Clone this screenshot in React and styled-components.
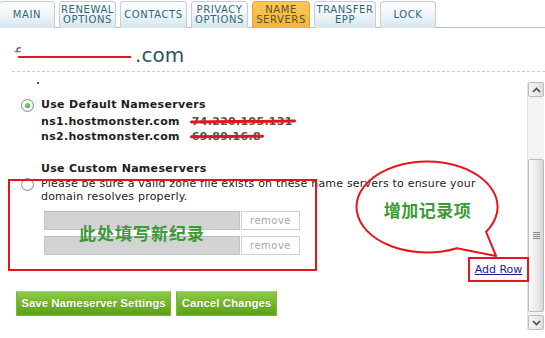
import styled, { createGlobalStyle } from "styled-components";

const Global = createGlobalStyle`
  html, body { margin: 0; padding: 0; background: #fff; }
  body { font-family: "DejaVu Sans", Verdana, sans-serif; }
`;

const Page = styled.div`
  position: relative;
  width: 545px;
  height: 338px;
  overflow: hidden;
  background: #fff;
  color: #222;
`;

const TabBar = styled.div`
  display: flex;
  gap: 4px;
  height: 28px;
  padding-top: 1px;
  box-sizing: border-box;
  border-bottom: 1px solid #b9c3c7;
  margin-left: -1px;
`;

const Tab = styled.div`
  width: ${(p) => p.w}px;
  height: 27px;
  box-sizing: border-box;
  border: 1px solid ${(p) => (p.active ? "#e7a63a" : "#c5cfd3")};
  border-bottom: none;
  border-radius: 4px 4px 0 0;
  background: ${(p) =>
    p.active
      ? "linear-gradient(#f9c75a, #f4b33b)"
      : "linear-gradient(#ffffff 0%, #f3f8fa 40%, #d5e6ef 100%)"};
  display: flex;
  align-items: center;
  justify-content: center;
  text-align: center;
  font-size: 10px;
  line-height: 10px;
  letter-spacing: 0.6px;
  color: ${(p) => (p.active ? "#5c5222" : "#2f6878")};
`;

const Header = styled.div`
  height: 44px;
  box-sizing: border-box;
  margin-left: 12px;
  padding: 14px 0 0 2px;
  border-bottom: 1px dashed #cccccc;
`;

const Title = styled.h1`
  margin: 0;
  font-size: 20px;
  font-weight: normal;
  line-height: 26px;
  color: #2c5364;
`;

const Ghost = styled.span`
  display: inline-block;
  color: #777;
  clip-path: inset(0 0 60% 0);
`;

const Redact = styled.span`
  display: inline-block;
  width: 113px;
  height: 2px;
  margin: 0 4px 0 -3px;
  background: #e3161d;
  vertical-align: 4px;
`;

const Body = styled.div`
  display: flex;
  height: 266px;
`;

const Content = styled.div`
  position: relative;
  flex: 1;
  min-width: 0;
`;

const Dot = styled.div`
  width: 2px;
  height: 2px;
  margin: 10px 0 0 37px;
  background: #555;
`;

const OptionRow = styled.div`
  display: flex;
  align-items: flex-start;
  gap: 7px;
  padding-left: 21px;
  margin-top: ${(p) => p.mt || 0}px;
`;

const Radio = styled.span`
  position: relative;
  flex: none;
  width: 13px;
  height: 13px;
  margin-top: ${(p) => p.mt || 0}px;
  box-sizing: border-box;
  border-radius: 50%;
  border: 1px solid #7f8e9c;
  background: radial-gradient(circle at 40% 35%, #ffffff 30%, #dde3e8 100%);

  &::after {
    content: "";
    display: ${(p) => (p.checked ? "block" : "none")};
    position: absolute;
    left: 3px;
    top: 3px;
    width: 5px;
    height: 5px;
    border-radius: 50%;
    background: radial-gradient(circle at 40% 35%, #7fe07a, #1f9a2a);
  }
`;

const Label = styled.div`
  font-size: 11px;
  font-weight: bold;
  line-height: 15px;
  letter-spacing: 0.3px;
  color: #1e1e1e;
`;

const NsList = styled.div`
  margin-top: 2px;
  padding-left: 41px;
`;

const NsLine = styled.div`
  display: flex;
  gap: 12px;
  font-size: 11px;
  font-weight: bold;
  line-height: 15px;
  letter-spacing: 0.3px;
  color: #1e1e1e;
`;

const Ip = styled.span`
  position: relative;
  color: #555;

  &::after {
    content: "";
    position: absolute;
    left: -2px;
    right: -3px;
    top: 6px;
    height: 3px;
    border-radius: 2px;
    background: #e3161d;
    transform: rotate(-0.6deg);
  }
`;

const Heading = styled(Label)`
  margin: 17px 0 0 41px;
`;

const Note = styled.div`
  font-size: 11px;
  line-height: 13px;
  letter-spacing: 0.2px;
  color: #222;
  white-space: nowrap;
  padding-top: 0.5px;
`;

const Fields = styled.div`
  position: relative;
  display: flex;
  flex-direction: column;
  gap: 6px;
  margin: 8px 0 0 44px;
  width: 256px;
`;

const FieldRow = styled.div`
  display: flex;
  gap: 1px;
  height: 19px;
`;

const Input = styled.div`
  width: 196px;
  box-sizing: border-box;
  background: #d3d3d3;
  border: 1px solid #c4c4c4;
  border-top-color: #b8b8b8;
`;

const RemoveBtn = styled.div`
  flex: 1;
  box-sizing: border-box;
  border: 1px solid #d2d2d2;
  background: #fff;
  display: flex;
  align-items: center;
  justify-content: center;
  font-size: 10px;
  letter-spacing: 0.5px;
  color: #a8a8a8;
`;

const FillHint = styled.div`
  position: absolute;
  left: 0;
  top: 0;
  bottom: 0;
  width: 196px;
  display: flex;
  align-items: center;
  justify-content: center;
  font-family: "Noto Sans CJK SC", sans-serif;
  font-weight: bold;
  font-size: 17px;
  color: #3d9a36;
  letter-spacing: 1px;
`;

const AddRowLine = styled.div`
  display: flex;
  justify-content: flex-end;
  margin: 2px -2px 0 0;
`;

const AddRowBox = styled.div`
  width: 61px;
  height: 25px;
  box-sizing: border-box;
  border: 2px solid #e3161d;
  display: flex;
  align-items: center;
  justify-content: center;
`;

const Link = styled.a`
  font-size: 11px;
  color: #1b1b8e;
  text-decoration: underline;
`;

const Actions = styled.div`
  display: flex;
  gap: 5px;
  margin: 9px 0 0 16px;
`;

const GreenButton = styled.button`
  width: ${(p) => p.w}px;
  height: 25px;
  padding: 0;
  border: 1px solid #79b83a;
  border-top-color: #a3d66a;
  background: linear-gradient(#8ccb45 0%, #72b62b 50%, #5e9f12 100%);
  color: #fff;
  font-family: "Liberation Sans", Arial, sans-serif;
  font-weight: bold;
  font-size: 11.5px;
  text-shadow: 0 0 1px rgba(40, 80, 0, 0.5);
`;

const Callout = styled.div`
  position: absolute;
  left: 355px;
  top: 160px;
  width: 146px;
  height: 100px;
  pointer-events: none;
`;

const CalloutShape = styled.svg`
  position: absolute;
  inset: 0;
`;

const CalloutText = styled.div`
  position: absolute;
  left: 0;
  top: 37px;
  width: 145px;
  text-align: center;
  font-family: "Noto Sans CJK SC", sans-serif;
  font-weight: bold;
  font-size: 17px;
  letter-spacing: 0.5px;
  color: #3d9a36;
`;

const Frame = styled.div`
  position: absolute;
  left: 8px;
  top: 107px;
  width: 309px;
  height: 92px;
  box-sizing: border-box;
  border: 2px solid #e3161d;
  pointer-events: none;
`;

const Scrollbar = styled.div`
  display: flex;
  flex-direction: column;
  width: 17px;
  height: 248px;
  margin-top: 10px;
  margin-right: 1px;
  background: #f3f3f3;
  border-left: 1px solid #e2e2e2;
  box-sizing: border-box;
`;

const ScrollBtn = styled.div`
  height: 15px;
  box-sizing: border-box;
  border: 1px solid #bdbdbd;
  border-radius: 2px;
  background: linear-gradient(90deg, #f6f6f6, #dedede);
  display: flex;
  align-items: center;
  justify-content: center;
`;

const Track = styled.div`
  flex: 1;
  display: flex;
  flex-direction: column;
  padding: 62px 0 3px;
`;

const Thumb = styled.div`
  flex: 1;
  box-sizing: border-box;
  border: 1px solid #bcbcbc;
  border-radius: 2px;
  background: linear-gradient(90deg, #fbfbfb, #e9e9e9 60%, #d6d6d6);
  display: flex;
  align-items: center;
  justify-content: center;
`;

const Grip = styled.div`
  width: 7px;
  height: 7px;
  background: repeating-linear-gradient(#8a8a8a 0 1px, transparent 1px 2px);
`;

const Chevron = ({ up }) => (
  <svg width="9" height="6" viewBox="0 0 9 6">
    <polyline
      points={up ? "1,5 4.5,1.5 8,5" : "1,1 4.5,4.5 8,1"}
      fill="none"
      stroke="#4d4d4d"
      strokeWidth="1.6"
    />
  </svg>
);

const tabs = [
  { w: 56, label: ["MAIN"] },
  { w: 57, label: ["RENEWAL", "OPTIONS"] },
  { w: 67, label: ["CONTACTS"] },
  { w: 57, label: ["PRIVACY", "OPTIONS"] },
  { w: 58, label: ["NAME", "SERVERS"], active: true },
  { w: 62, label: ["TRANSFER", "EPP"] },
  { w: 56, label: ["LOCK"] },
];

const App = () => {
  return (
    <Page>
      <Global />
      <TabBar>
        {tabs.map((t) => (
          <Tab key={t.label.join()} w={t.w} active={t.active}>
            <span>
              {t.label.map((l, i) => (
                <div key={i}>{l}</div>
              ))}
            </span>
          </Tab>
        ))}
      </TabBar>

      <Header>
        <Title>
          <Ghost>f</Ghost>
          <Redact />.com
        </Title>
      </Header>

      <Body>
        <Content>
          <Dot />
          <OptionRow mt={13}>
            <Radio checked mt={2} />
            <Label>Use Default Nameservers</Label>
          </OptionRow>
          <NsList>
            <NsLine>
              <span>ns1.hostmonster.com</span>
              <Ip>74.220.195.131</Ip>
            </NsLine>
            <NsLine>
              <span>ns2.hostmonster.com</span>
              <Ip>69.89.16.8</Ip>
            </NsLine>
          </NsList>

          <Heading>Use Custom Nameservers</Heading>
          <OptionRow>
            <Radio mt={2} />
            <Note>
              Please be sure a valid zone file exists on these name servers to ensure your
              <br />
              domain resolves properly.
            </Note>
          </OptionRow>
          <Fields>
            <FieldRow>
              <Input />
              <RemoveBtn>remove</RemoveBtn>
            </FieldRow>
            <FieldRow>
              <Input />
              <RemoveBtn>remove</RemoveBtn>
            </FieldRow>
            <FillHint>此处填写新纪录</FillHint>
          </Fields>

          <AddRowLine>
            <AddRowBox>
              <Link href="#">Add Row</Link>
            </AddRowBox>
          </AddRowLine>

          <Actions>
            <GreenButton w={155}>Save Nameserver Settings</GreenButton>
            <GreenButton w={101}>Cancel Changes</GreenButton>
          </Actions>

          <Frame />
        </Content>

        <Scrollbar>
          <ScrollBtn>
            <Chevron up />
          </ScrollBtn>
          <Track>
            <Thumb>
              <Grip />
            </Thumb>
          </Track>
          <ScrollBtn>
            <Chevron />
          </ScrollBtn>
        </Scrollbar>
      </Body>

      <Callout>
        <CalloutShape width="146" height="100" viewBox="355 160 146 100">
          <path
            d="M 456.8 248.2 A 70.5 45.5 0 1 1 486.1 231.8 L 496 256 Z"
            fill="none"
            stroke="#e3161d"
            strokeWidth="2"
            strokeLinejoin="round"
          />
        </CalloutShape>
        <CalloutText>增加记录项</CalloutText>
      </Callout>
    </Page>
  );
};

export default App;
